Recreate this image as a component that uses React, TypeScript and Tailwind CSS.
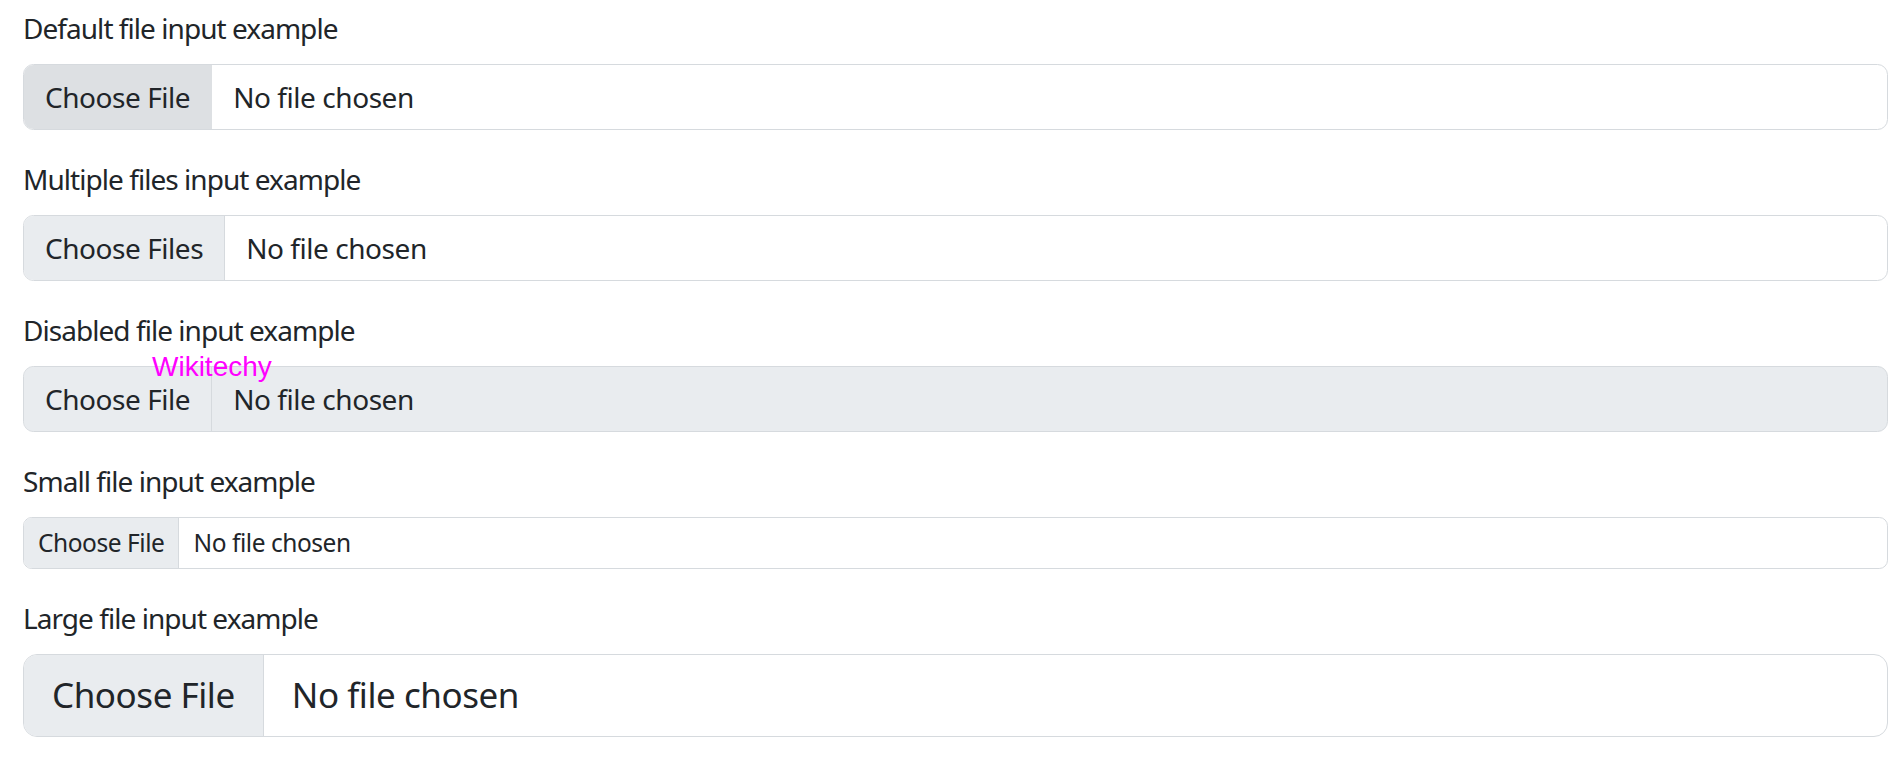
const inputs = [
  { label: 'Default file input example', button: 'Choose File', size: 'md', hover: true },
  { label: 'Multiple files input example', button: 'Choose Files', size: 'md' },
  { label: 'Disabled file input example', button: 'Choose File', size: 'md', disabled: true },
  { label: 'Small file input example', button: 'Choose File', size: 'sm' },
  { label: 'Large file input example', button: 'Choose File', size: 'lg' },
]

function FileInput({ button, size, hover, disabled }: { button: string; size: string; hover?: boolean; disabled?: boolean }) {
  const box =
    size === 'sm'
      ? 'h-[52px] text-[24.5px] rounded-[8.75px]'
      : size === 'lg'
        ? 'h-[83px] text-[35px] rounded-[14px]'
        : 'h-[66px] text-[28px] rounded-[10.5px]'
  const pad = size === 'sm' ? 'px-[14px]' : size === 'lg' ? 'px-[28px]' : 'px-[21px]'
  const gap = size === 'sm' ? 'ml-[14px]' : size === 'lg' ? 'ml-[28px]' : 'ml-[21px]'

  return (
    <div
      className={`flex items-stretch overflow-hidden border-[1.75px] border-[#d6dade] ${box} ${
        disabled ? 'bg-[#e9ecef]' : 'bg-white'
      }`}
    >
      <div
        className={`flex items-center ${pad} border-r-[1.75px] ${
          hover ? 'bg-[#dde0e3] border-[#dde0e3]' : 'bg-[#e9ecef] border-[#d6dade]'
        }`}
      >
        {button}
      </div>
      <div className={`flex items-center ${gap}`}>No file chosen</div>
    </div>
  )
}

export default function App() {
  return (
    <div
      className="relative bg-white min-h-screen pt-[7px] pl-[23px] pr-[15px] text-[#212529] tracking-[-0.028em]"
      style={{ fontFamily: '"Noto Sans", sans-serif' }}
    >
      {inputs.map((item) => (
        <div key={item.label} className="mb-[28px]">
          <label className="block text-[28px] leading-[42px] mb-[15px] tracking-[-0.034em]">{item.label}</label>
          <FileInput button={item.button} size={item.size} hover={item.hover} disabled={item.disabled} />
        </div>
      ))}

      {/* watermark */}
      <div className="absolute left-[152px] top-[351px] text-[28px] leading-[32px] tracking-normal text-[#ff00ff] font-['Liberation_Sans',sans-serif] pointer-events-none">
        Wikitechy
      </div>
    </div>
  )
}
